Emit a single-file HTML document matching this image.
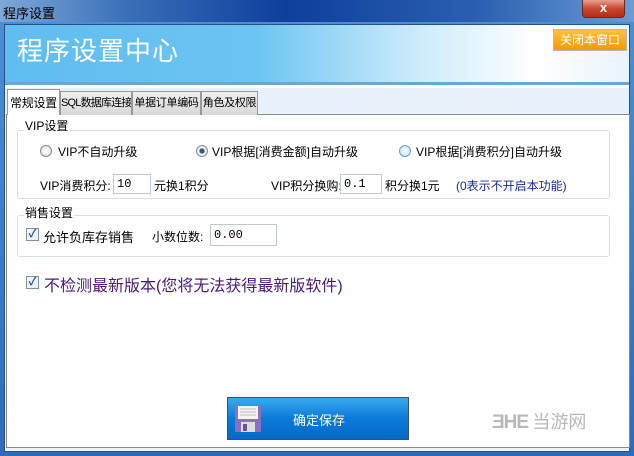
<!DOCTYPE html>
<html><head><meta charset="utf-8"><style>
*{margin:0;padding:0;box-sizing:border-box}
body{width:634px;height:456px;overflow:hidden;background:#1f5fae;font-family:"Liberation Sans","Noto Sans CJK SC",sans-serif;font-size:12px;color:#000;position:relative}
.abs{position:absolute;white-space:nowrap}
#title{left:0;top:0;width:634px;height:22px;background:linear-gradient(90deg,#7fa8d8 0%,#3a6fb8 20%,#0e3f9c 45%,#2a5fb0 75%,#6a9bd4 100%)}
#frame{left:0;top:22px;width:634px;height:434px;background:linear-gradient(180deg,#4a8fd6,#2c6bbf)}
#inner{left:4px;top:24px;width:626px;height:428px;background:#fff;border:1px solid #2b4f80}
#head{left:5px;top:25px;width:624px;height:60px;background:linear-gradient(90deg,#5fbdf0 0%,#6cc4f2 40%,#c8eafb 65%,#fff 85%,#e8f4fb 100%);border-bottom:3px solid #6aa8d0}
#body{left:5px;top:88px;width:624px;height:363px;background:linear-gradient(180deg,#e6f1fb,#f3f8fc 40%,#eef3f7)}
.tab{top:91px;height:24px;border:1px solid #999;border-bottom:none;background:linear-gradient(#f0f0f0,#d8d8d8);font-size:11px;line-height:22px;text-align:center;overflow:hidden;letter-spacing:-0.3px}
#panel{left:6px;top:114px;width:624px;height:334px;background:#fff;border:1px solid #8a8a8a}
fieldset{position:absolute;border:1px solid #d5dfe5;border-radius:3px}
.lbl{position:absolute;background:#fff;font-size:12px;padding:0 1px;white-space:nowrap}
input{position:absolute;height:20px;border:1px solid #c0c8d0;font-family:"Liberation Mono",monospace;font-size:12px;padding-left:3px}
.radio{position:absolute;width:12px;height:12px;border-radius:50%;border:1px solid #8a8a8a;background:radial-gradient(#fff,#ddd)}
.cb{position:absolute;width:13px;height:13px;border:1px solid #8090a0;background:#eef3f8;color:#2a4f9a;font-size:11px;line-height:11px;text-align:center;font-weight:bold}
</style></head><body>
<div id="title" class="abs"><span class="abs" style="left:3px;top:3px;color:#000;font-size:13px">程序设置</span>
<div class="abs" style="left:582px;top:0;width:43px;height:18px;background:linear-gradient(#e8a090,#c8472e 50%,#b03015);border:1px solid #6a2a20;border-top:none;border-radius:0 0 4px 4px;color:#fff;font-weight:bold;text-align:center;font-size:13px;line-height:16px">x</div></div>
<div id="frame" class="abs"></div>
<div id="inner" class="abs"></div>
<div id="head" class="abs"></div>
<div class="abs" style="left:17px;top:31px;color:#fff;font-size:26px;letter-spacing:1px">程序设置中心</div>
<div class="abs" style="left:553px;top:29px;width:74px;height:22px;background:linear-gradient(#ffc040,#f59a00);border:1px solid #b8b8b8;color:#fff;font-size:12px;line-height:20px;text-align:center">关闭本窗口</div>
<div id="body" class="abs"></div>
<div id="panel" class="abs"></div>
<div class="tab abs" style="left:7px;width:53px;top:89px;height:26px;background:#fff;font-size:12px;line-height:26px">常规设置</div>
<div class="tab abs" style="left:60px;width:72px;letter-spacing:-0.8px">SQL数据库连接</div>
<div class="tab abs" style="left:132px;width:69px">单据订单编码</div>
<div class="tab abs" style="left:201px;width:57px">角色及权限</div>

<fieldset style="left:17px;top:130px;width:593px;height:69px"></fieldset>
<div class="lbl" style="left:24px;top:117px">VIP设置</div>
<div class="radio" style="left:40px;top:145px"></div><div class="abs" style="left:58px;top:143px">VIP不自动升级</div>
<div class="radio" style="left:196px;top:145px;background:radial-gradient(#2a5a90 30%,#fff 45%,#ccc)"></div><div class="abs" style="left:212px;top:143px">VIP根据[消费金额]自动升级</div>
<div class="radio" style="left:399px;top:145px;background:radial-gradient(#fff,#b8def5);border-color:#6aa0c8"></div><div class="abs" style="left:416px;top:143px">VIP根据[消费积分]自动升级</div>
<div class="abs" style="left:40px;top:177px">VIP消费积分:</div>
<input style="left:113px;top:174px;width:38px" value="10">
<div class="abs" style="left:154px;top:177px">元换1积分</div>
<div class="abs" style="left:271px;top:177px">VIP积分换购:</div>
<input style="left:340px;top:174px;width:42px" value="0.1">
<div class="abs" style="left:385px;top:177px">积分换1元</div>
<div class="abs" style="left:456px;top:177px;color:#1a2a9a">(0表示不开启本功能)</div>

<fieldset style="left:17px;top:215px;width:593px;height:42px"></fieldset>
<div class="lbl" style="left:24px;top:204px">销售设置</div>
<div class="cb" style="left:26px;top:228px">✓</div><div class="abs" style="left:43px;top:227px;font-size:13px">允许负库存销售</div>
<div class="abs" style="left:152px;top:228px">小数位数:</div>
<input style="left:210px;top:224px;width:67px;height:22px" value="0.00">

<div class="cb" style="left:26px;top:276px">✓</div><div class="abs" style="left:44px;top:272px;font-size:16px;color:#4a1a78">不检测最新版本(您将无法获得最新版软件)</div>

<div class="abs" style="left:227px;top:397px;width:182px;height:43px;background:linear-gradient(#3aa8f0,#0a7ad8 50%,#0868c8);border:1px solid #405070"></div>
<svg class="abs" style="left:234px;top:404px" width="28" height="29"><rect x="1" y="1" width="26" height="27" fill="#8a70c0"/><rect x="4" y="2" width="20" height="13" fill="#f4f4f4"/><g stroke="#bbb"><line x1="6" y1="5" x2="22" y2="5"/><line x1="6" y1="8" x2="22" y2="8"/><line x1="6" y1="11" x2="22" y2="11"/></g><rect x="7" y="18" width="14" height="10" fill="#ddd"/><rect x="9" y="20" width="4" height="7" fill="#6a50a0"/></svg>
<div class="abs" style="left:293px;top:410px;color:#fff;font-size:13px">确定保存</div>
<div class="abs" style="left:492px;top:408px;color:#b8b8b8;font-size:19px;font-weight:bold;letter-spacing:-1px">ƎHE <span style="font-weight:normal;font-size:18px;letter-spacing:0">当游网</span></div>
</body></html>
